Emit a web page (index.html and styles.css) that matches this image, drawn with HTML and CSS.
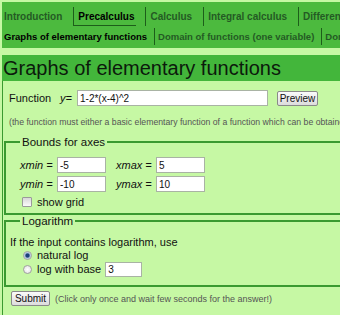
FILE: index.html
```html
<!DOCTYPE html>
<html>
<head>
<meta charset="utf-8">
<title>Graphs of elementary functions</title>
<link rel="stylesheet" href="styles.css">
</head>
<body>
<div class="tabs">
  <div class="tabrow r1">
    <span class="tab first">Introduction</span>
    <span class="tab sel">Precalculus</span>
    <span class="tab">Calculus</span>
    <span class="tab">Integral calculus</span>
    <span class="tab">Differential equations</span>
  </div>
  <div class="tabrow r2">
    <span class="tab first cur">Graphs of elementary functions</span>
    <span class="tab">Domain of functions (one variable)</span>
    <span class="tab">Domain of functions (two variables)</span>
  </div>
</div>
<h1 class="heading">Graphs of elementary functions</h1>
<div class="panel">
  <div class="fnrow">
    <span class="fnlabel">Function</span>
    <span class="yeq">y=</span>
    <input class="txt fninput" type="text" value="1-2*(x-4)^2">
    <button class="btn preview">Preview</button>
  </div>
  <div class="note">(the function must either a basic elementary function of a function which can be obtained from basic elementary functions)</div>
  <fieldset class="box bounds">
    <legend>Bounds for axes</legend>
    <div class="brow">
      <span class="blabel">xmin =</span><input class="txt bin" type="text" value="-5">
      <span class="blabel second">xmax =</span><input class="txt bin" type="text" value="5">
    </div>
    <div class="brow">
      <span class="blabel">ymin =</span><input class="txt bin" type="text" value="-10">
      <span class="blabel second">ymax =</span><input class="txt bin" type="text" value="10">
    </div>
    <label class="grid"><input class="chk" type="checkbox"><span>show grid</span></label>
  </fieldset>
  <fieldset class="box log">
    <legend>Logarithm</legend>
    <p class="logtext">If the input contains logarithm, use</p>
    <label class="rrow r-nat"><input class="rad" type="radio" name="log" checked><span>natural log</span></label>
    <label class="rrow r-base"><input class="rad" type="radio" name="log"><span>log with base</span><input class="txt basein" type="text" value="3"></label>
  </fieldset>
  <div class="submitrow">
    <button class="btn submit">Submit</button>
    <span class="subnote">(Click only once and wait few seconds for the answer!)</span>
  </div>
</div>
</body>
</html>
```
FILE: styles.css
```css
html, body {
  margin: 0;
  padding: 0;
}
body {
  width: 340px;
  height: 315px;
  overflow: hidden;
  background: #c6f8a4;
  font-family: "Liberation Sans", Arial, sans-serif;
  font-size: 11px;
  color: #111;
}
.tabs {
  margin: 2px 0 0 2px;
  background: #4cba3e;
  padding: 5px 0 3px 2px;
  white-space: nowrap;
  overflow: hidden;
}
.tabrow {
  display: flex;
  white-space: nowrap;
  overflow: hidden;
}
.tab {
  flex: none;
  font-weight: bold;
  color: #245a24;
  border-left: 1px solid #1d5e1a;
}
.r1 .tab {
  font-size: 10px;
  height: 19px;
  line-height: 19px;
  padding: 0 2px 0 4px;
  margin-right: 9px;
  box-sizing: border-box;
}
.r2 {
  margin-top: 2px;
}
.r2 .tab {
  font-size: 9.5px;
  height: 17px;
  line-height: 17px;
  padding: 0 2px 0 3px;
  margin-right: 5px;
}
.tab.first {
  border-left: none;
  padding-left: 0;
}
.tab.sel {
  color: #000;
  border-bottom: 1px solid #1d5e1a;
}
.tab.cur {
  color: #000;
}
.heading {
  margin: 7px 0 0 2px;
  height: 26px;
  line-height: 26px;
  padding-left: 1px;
  background: #43b63b;
  font-size: 20px;
  font-weight: normal;
  color: #0c1a0c;
  white-space: nowrap;
  overflow: hidden;
}
.panel {
  margin-left: 2px;
  border-left: 1px solid #3a9a30;
  padding-top: 9px;
  height: 225px;
  overflow: hidden;
}
.fnrow {
  display: flex;
  align-items: center;
  height: 16px;
  padding-left: 6px;
}
.fnlabel {
  width: 51px;
  flex: none;
}
.yeq {
  width: 17px;
  flex: none;
  font-style: italic;
}
.txt {
  box-sizing: border-box;
  border: 1px solid #a9b3a4;
  background: #fff;
  font-family: "Liberation Sans", Arial, sans-serif;
  font-size: 10px;
  color: #111;
  padding: 0 2px;
  margin: 0;
  outline: none;
}
.fninput {
  width: 191px;
  height: 16px;
}
.btn {
  box-sizing: border-box;
  height: 15px;
  padding: 0;
  border: 1px solid #8a8a8a;
  border-radius: 2px;
  background: linear-gradient(#fafafa, #dcdcdc);
  font-family: "Liberation Sans", Arial, sans-serif;
  font-size: 10px;
  color: #111;
  line-height: 13px;
}
.preview {
  width: 41px;
  margin-left: 9px;
}
.note {
  margin-top: 10px;
  padding-left: 6px;
  font-size: 8.7px;
  line-height: 12px;
  color: #555;
  white-space: nowrap;
  overflow: hidden;
}
.box {
  border: 2px solid #3a9a30;
  border-right: none;
  margin: 0 0 0 1px;
  min-width: 0;
}
.box legend {
  padding: 0 2px;
  font-size: 11.5px;
  line-height: 12px;
  color: #111;
}
.bounds {
  margin-top: 8px;
  padding: 0 0 4px 14px;
}
.brow {
  display: flex;
  align-items: center;
  height: 16px;
  margin-top: 3px;
}
.brow:first-of-type {
  margin-top: 9px;
}
.blabel {
  width: 37px;
  flex: none;
  font-style: italic;
}
.blabel.second {
  width: 40px;
  margin-left: 10px;
}
.bin {
  width: 49px;
  height: 16px;
  flex: none;
}
.grid {
  display: flex;
  align-items: center;
  height: 14px;
  margin-top: 3px;
}
.chk {
  appearance: none;
  -webkit-appearance: none;
  width: 10px;
  height: 10px;
  margin: 0 0 0 2px;
  border: 1px solid #9a9a9a;
  border-radius: 1px;
  background: linear-gradient(#d8d8d8, #fafafa);
  box-sizing: border-box;
}
.grid span {
  margin-left: 5px;
}
.log {
  padding: 0 0 8px 4px;
}
.log legend {
  margin-left: 10px;
}
.logtext {
  margin: 8px 0 0;
  line-height: 14px;
}
.rrow {
  display: flex;
  align-items: center;
  padding-left: 13px;
}
.r-nat {
  height: 12px;
}
.r-base {
  height: 16px;
}
.rad {
  appearance: none;
  -webkit-appearance: none;
  width: 9px;
  height: 9px;
  margin: 0;
  border: 1px solid #a0a0a0;
  border-radius: 50%;
  box-sizing: border-box;
  background: radial-gradient(circle at 50% 50%, #fff 0, #dedede 100%);
}
.rad:checked {
  background: radial-gradient(circle at 50% 50%, #1d3f7a 0, #1d3f7a 1.6px, #9fb9d8 2.6px, #f2f6fa 4px);
}
.rrow span {
  margin-left: 5px;
}
.basein {
  width: 37px;
  height: 15px;
  margin-left: 4px;
}
.submitrow {
  display: flex;
  align-items: center;
  margin-top: 4px;
  padding-left: 8px;
}
.submit {
  width: 39px;
}
.subnote {
  margin-left: 5px;
  font-size: 9px;
  color: #555;
  white-space: nowrap;
}
```
